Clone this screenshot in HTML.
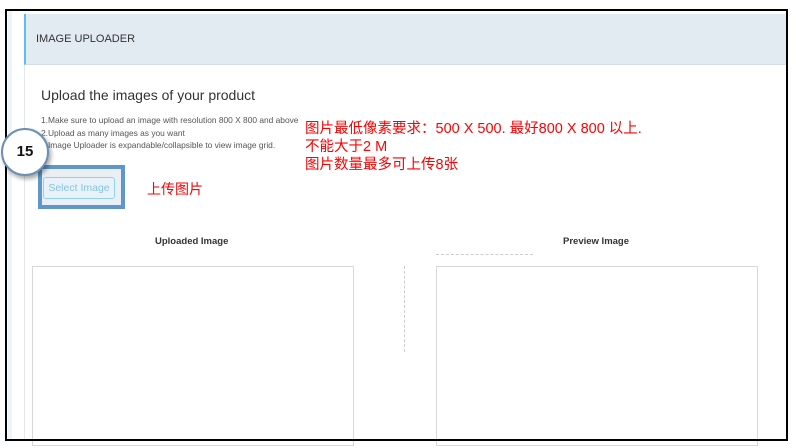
<!DOCTYPE html>
<html><head><meta charset="utf-8"><style>
*{margin:0;padding:0;box-sizing:border-box}
body{width:796px;height:448px;background:#fff;position:relative;overflow:hidden;font-family:"Liberation Sans","Noto Sans CJK SC",sans-serif}
.a{position:absolute}
</style></head><body>
<div class="a" style="left:5px;top:9px;width:783px;height:432px;border:2px solid #000"></div>
<div class="a" style="left:8px;top:11px;width:4px;height:428px;background:#eef4f9"></div>
<div class="a" style="left:24px;top:14px;width:762px;height:425px;border-left:1px solid #e3e8ec"></div>
<div class="a" style="left:24px;top:14px;width:762px;height:51px;background:#e3ebf2;border-left:2px solid #5bc0e8;border-bottom:1px solid #d6dee5"></div>
<div class="a" style="left:36px;top:33px;font-size:11px;color:#333">IMAGE UPLOADER</div>
<div class="a" style="left:41px;top:87px;font-size:14px;color:#333">Upload the images of your product</div>
<div class="a" style="left:41px;top:114px;font-size:8.4px;color:#555;line-height:12.5px">1.Make sure to upload an image with resolution 800 X 800 and above<br>2.Upload as many images as you want<br>3.Image Uploader is expandable/collapsible to view image grid.</div>
<div class="a" style="left:305px;top:120px;font-size:14.5px;color:#f00;line-height:18px;white-space:nowrap">图片最低像素要求：500 X 500. 最好800 X 800 以上.<br>不能大于2 M<br>图片数量最多可上传8张</div>
<div class="a" style="left:38px;top:165px;width:87px;height:44px;border:4px solid #5f97cb;background:#e9eff5"></div>
<div class="a" style="left:43px;top:177px;width:72px;height:22px;border:1px solid #8fd2ee;border-radius:3px;background:#e9f2f8;color:#7fc6e6;font-size:10.5px;text-align:center;line-height:20px">Select Image</div>
<div class="a" style="left:147px;top:179px;font-size:14px;color:#f00">上传图片</div>
<div class="a" style="left:1px;top:128px;width:48px;height:48px;border-radius:50%;background:#fff;border:2px solid #6c8fb3;box-shadow:2px 3px 4px rgba(0,0,0,.35);font-weight:bold;font-size:15px;text-align:center;line-height:44px;color:#111">15</div>
<div class="a" style="left:155px;top:236px;font-size:9.5px;font-weight:bold;color:#333">Uploaded Image</div>
<div class="a" style="left:563px;top:236px;font-size:9.5px;font-weight:bold;color:#333">Preview Image</div>
<div class="a" style="left:436px;top:254px;width:97px;border-top:1px dashed #ccc"></div>
<div class="a" style="left:404px;top:266px;height:86px;border-left:1px dashed #ccc"></div>
<div class="a" style="left:32px;top:266px;width:322px;height:180px;border:1px solid #d8d8d8"></div>
<div class="a" style="left:436px;top:266px;width:322px;height:180px;border:1px solid #d8d8d8"></div>
<div class="a" style="left:5px;top:439px;width:783px;height:2px;background:#000"></div>
</body></html>
